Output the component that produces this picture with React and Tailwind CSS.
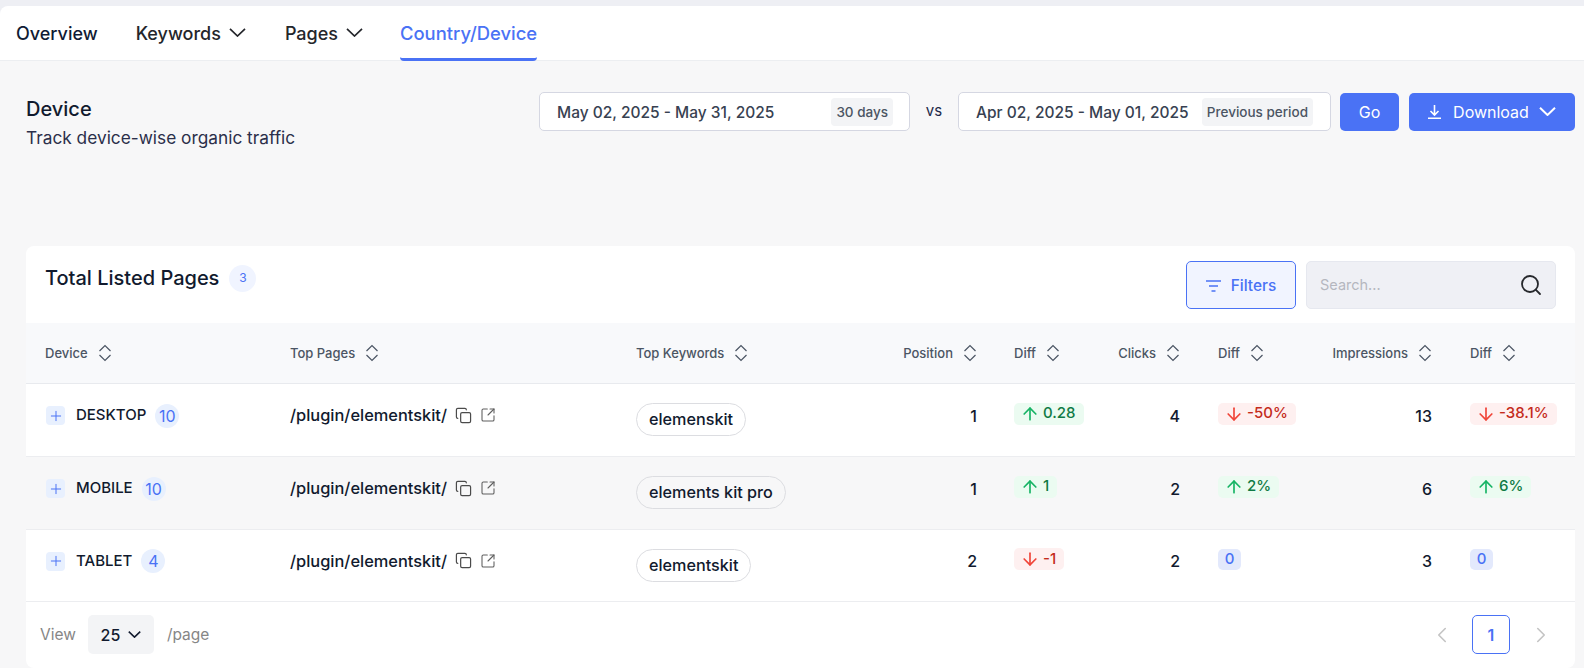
import { ChevronLeft, ChevronRight, Copy, SquareArrowOutUpRight, ArrowUp, ArrowDown, Plus, Search } from 'lucide-react';

const rows = [
  { device: 'DESKTOP', count: 10, keyword: 'elemenskit', position: 1, posDiff: { dir: 'up', text: '0.28' }, clicks: 4, clickDiff: { dir: 'down', text: '-50%' }, impressions: 13, impDiff: { dir: 'down', text: '-38.1%' } },
  { device: 'MOBILE', count: 10, keyword: 'elements kit pro', position: 1, posDiff: { dir: 'up', text: '1' }, clicks: 2, clickDiff: { dir: 'up', text: '2%' }, impressions: 6, impDiff: { dir: 'up', text: '6%' } },
  { device: 'TABLET', count: 4, keyword: 'elementskit', position: 2, posDiff: { dir: 'down', text: '-1' }, clicks: 2, clickDiff: { text: '0' }, impressions: 3, impDiff: { text: '0' } },
];

const SortIcon = () => (
  <svg width="14" height="18" viewBox="0 0 14 18" fill="none" stroke="#4b5563" strokeWidth="1.2" className="ml-2.5 shrink-0">
    <path d="M1.5 7 7 1.5 12.5 7" />
    <path d="M1.5 11 7 16.5 12.5 11" />
  </svg>
);

const Chevron = ({ className, width = 17, height = 9, strokeWidth = 1.7 }) => (
  <svg width={width} height={height} viewBox="0 0 17 9" fill="none" stroke="currentColor" strokeWidth={strokeWidth} className={className}>
    <path d="M1 .8 8.5 8 16 .8" />
  </svg>
);

const Diff = ({ diff }) => {
  if (diff.dir === 'up') {
    return (
      <div className="flex">
        <span className="flex items-center h-[22px] pl-1.5 pr-2 rounded-[5px] bg-[#ebfbf1] text-[#0f7a45] text-[15px]">
          <ArrowUp className="h-5 w-5 mr-[3px] text-[#16b364]" strokeWidth={2} />
          {diff.text}
        </span>
      </div>
    );
  }
  if (diff.dir === 'down') {
    return (
      <div className="flex">
        <span className="flex items-center h-[22px] pl-1.5 pr-2 rounded-[5px] bg-[#fef0f0] text-[#c42b1c] text-[15px]">
          <ArrowDown className="h-5 w-5 mr-[3px] text-[#f04438]" strokeWidth={2} />
          {diff.text}
        </span>
      </div>
    );
  }
  return (
    <div className="flex">
      <span className="flex items-center justify-center h-[21px] w-[23px] rounded-[5px] bg-[#e3e9fc] text-[#4a72f5] text-[15px]">
        {diff.text}
      </span>
    </div>
  );
};

const Header = ({ label, right, className }) => (
  <th className={`pt-px font-medium text-[13px] text-[#4b5563] ${className}`}>
    <div className={`flex items-center ${right ? 'justify-end' : ''}`}>
      {label}
      <SortIcon />
    </div>
  </th>
);

export default function App() {
  return (
    <div className="h-[668px] w-[1584px] overflow-hidden bg-[#eeeff4] pt-1.5 font-['Inter',sans-serif] text-[#111a2e]">
      {/* Tabs */}
      <nav className="flex h-[55px] items-stretch rounded-tl-lg bg-white pl-4 text-lg font-medium border-b border-[#eceef1]">
        <a className="flex items-center pt-0.5 text-[#101b35] mr-[38px]">Overview</a>
        <a className="flex items-center pt-0.5 text-[#24262b] mr-[39px]">
          Keywords
          <Chevron className="ml-2 -mt-1" />
        </a>
        <a className="flex items-center pt-0.5 text-[#24262b] mr-[37px]">
          Pages
          <Chevron className="ml-2 -mt-1" />
        </a>
        <a className="flex items-center pt-0.5 text-[18.4px] text-[#4a72f5] border-b-[3px] border-[#4a72f5] -mb-px rounded-b-sm">Country/Device</a>
      </nav>

      <main className="h-[607px] bg-[#f7f7f8] pl-[26px] pr-[9px]">
        {/* Page head */}
        <div className="flex h-[185px] items-start justify-between pt-[31px]">
          <div className="-mt-px pt-0.5">
            <h1 className="text-xl font-medium leading-[32px] text-[#111a2e]">Device</h1>
            <p className="text-[17.3px] leading-[26px] text-[#2b2f4a]">Track device-wise organic traffic</p>
          </div>
          <div className="flex items-center text-[#374151]">
            <div className="flex h-[39px] w-[371px] items-center justify-between rounded-[5px] border border-[#d5d7e2] bg-white pl-[17px] pr-4 text-[15.5px] font-medium">
              <span className="pt-0.5">May 02, 2025 - May 31, 2025</span>
              <span className="rounded bg-[#f3f4f6] px-[5px] py-1 text-[13.5px] leading-5 text-[#4b5563]">30 days</span>
            </div>
            <span className="w-12 text-center text-[15px] text-[#1e2a4a]">vs</span>
            <div className="flex h-[39px] w-[373px] items-center justify-between rounded-[5px] border border-[#d5d7e2] bg-white pl-[17px] pr-[17px] text-[15.5px] font-medium">
              <span className="pt-0.5">Apr 02, 2025 - May 01, 2025</span>
              <span className="rounded bg-[#f3f4f6] px-[5px] py-1 text-[13.5px] leading-5 text-[#4b5563]">Previous period</span>
            </div>
            <button className="ml-[9px] h-[38px] w-[59px] rounded-[5px] bg-[#4a72f5] pt-px text-base text-white">Go</button>
            <button className="ml-2.5 flex h-[38px] w-[166px] items-center justify-center rounded-[5px] bg-[#4a72f5] pt-px text-base text-white">
              <svg width="13" height="14" viewBox="0 0 13 14" fill="none" stroke="currentColor" strokeWidth="1.6" className="mr-3">
                <path d="M6.5 0v9.5M2.5 6 6.5 10 10.5 6M0 13.2h13" />
              </svg>
              Download
              <Chevron className="ml-2.5 -mt-0.5" strokeWidth={2} />
            </button>
          </div>
        </div>

        {/* Table card */}
        <section className="rounded-lg bg-white">
          <div className="flex h-[77px] items-start justify-between px-[19px] pt-[15px]">
            <div className="mt-px flex items-center">
              <h2 className="text-xl font-medium leading-[32px]">Total Listed Pages</h2>
              <span className="ml-2.5 flex h-[27px] w-[27px] items-center justify-center rounded-full bg-[#f0f4ff] text-xs text-[#4a72f5]">3</span>
            </div>
            <div className="flex items-center">
              <button className="flex h-12 w-[110px] items-center justify-center rounded-[5px] border border-[#4a72f5] bg-[#f1f4ff] pt-px text-[15.4px] font-medium text-[#4a72f5]">
                <svg width="15" height="12" viewBox="0 0 15 12" fill="none" stroke="currentColor" strokeWidth="1.3" className="mr-[10px]">
                  <path d="M0 1h15M3 6h9M5.5 11h4" />
                </svg>
                Filters
              </button>
              <div className="ml-2.5 flex h-12 w-[250px] items-center justify-between rounded-[5px] border border-[#e6e8ef] bg-[#eff0f5] pl-[13px] pr-[12px] text-[14.5px] text-[#b5b7bf]">
                Search...
                <Search className="h-6 w-6 text-[#26282c]" strokeWidth={1.8} />
              </div>
            </div>
          </div>

          <table className="w-full table-fixed border-collapse">
            <colgroup>
              <col className="w-[245px]" />
              <col className="w-[346px]" />
              <col className="w-[267px]" />
              <col className="w-[111px]" />
              <col className="w-[107px]" />
              <col className="w-[97px]" />
              <col className="w-[114px]" />
              <col className="w-[138px]" />
              <col className="w-[124px]" />
            </colgroup>
            <thead>
              <tr className="h-[60px] border-b border-[#e8eaee] bg-[#f8f9fb]">
                <Header label="Device" className="pl-[19px]" />
                <Header label="Top Pages" className="pl-[19px]" />
                <Header label="Top Keywords" className="pl-[19px]" />
                <Header label="Position" right className="pr-[18px]" />
                <Header label="Diff" className="pl-[19px]" />
                <Header label="Clicks" right className="pr-[19px]" />
                <Header label="Diff" className="pl-[19px]" />
                <Header label="Impressions" right className="pr-[19px]" />
                <Header label="Diff" className="pl-[19px]" />
              </tr>
            </thead>
            <tbody className="text-base font-medium text-[#111a2e]">
              {rows.map((row, i) => (
                <tr key={row.device} className={`border-b border-[#ecedf0] ${i === 2 ? 'h-[72px]' : 'h-[73px]'} ${i === 1 ? 'bg-[#f7f7f8]' : 'bg-white'}`}>
                  <td className="pl-5 pb-2">
                    <div className="flex items-center">
                      <span className="flex h-[19px] w-[19px] items-center justify-center rounded bg-[#e8f0fe] text-[#4a72f5]">
                        <Plus className="h-4 w-4" strokeWidth={1.5} />
                      </span>
                      <span className="ml-[11px] text-[15px]">{row.device}</span>
                      <span className="ml-[9px] flex h-6 min-w-6 items-center justify-center rounded-full bg-[#e8f0fe] text-base font-normal text-[#4a72f5]">{row.count}</span>
                    </div>
                  </td>
                  <td className="pl-[19px] pb-2">
                    <div className="flex items-center text-[16.4px]">
                      /plugin/elementskit/
                      <Copy className="ml-2 h-[17px] w-[17px] text-[#4b4b4b]" strokeWidth={1.7} />
                      <SquareArrowOutUpRight className="ml-2 h-4 w-4 text-[#5f5f5f]" strokeWidth={1.6} />
                    </div>
                  </td>
                  <td className="pl-[19px]">
                    <span className="inline-flex h-[33px] items-center rounded-full border border-[#dcdde1] px-3 text-[16.2px]">{row.keyword}</span>
                  </td>
                  <td className="pr-[18px] pb-2 text-right">{row.position}</td>
                  <td className="pl-[19px] pb-3"><Diff diff={row.posDiff} /></td>
                  <td className="pr-[19px] pb-2 text-right">{row.clicks}</td>
                  <td className="pl-[19px] pb-3"><Diff diff={row.clickDiff} /></td>
                  <td className="pr-[19px] pb-2 text-right">{row.impressions}</td>
                  <td className="pl-[19px] pb-3"><Diff diff={row.impDiff} /></td>
                </tr>
              ))}
            </tbody>
          </table>

          {/* Pagination */}
          <div className="flex h-[66px] items-center justify-between rounded-b-lg pl-3.5 pr-[21px] text-[15.5px]">
            <div className="flex items-center">
              <span className="text-[#868686]">View</span>
              <span className="ml-3 flex h-[39px] w-[66px] items-center justify-center rounded-[5px] bg-[#f3f4f6] text-base font-medium text-[#111a2e]">
                25
                <Chevron className="ml-2" width={13} height={7} strokeWidth={2} />
              </span>
              <span className="ml-[13px] text-[#868686]">/page</span>
            </div>
            <div className="flex items-center">
              <ChevronLeft className="h-[26px] w-[26px] text-[#c4c4c4]" strokeWidth={1.5} />
              <span className="ml-[17px] mr-[18px] flex h-[39px] w-[38px] items-center justify-center rounded-[5px] border border-[#4a72f5] text-base font-semibold text-[#4a72f5]">1</span>
              <ChevronRight className="h-[26px] w-[26px] text-[#c4c4c4]" strokeWidth={1.5} />
            </div>
          </div>
        </section>
      </main>
    </div>
  );
}
